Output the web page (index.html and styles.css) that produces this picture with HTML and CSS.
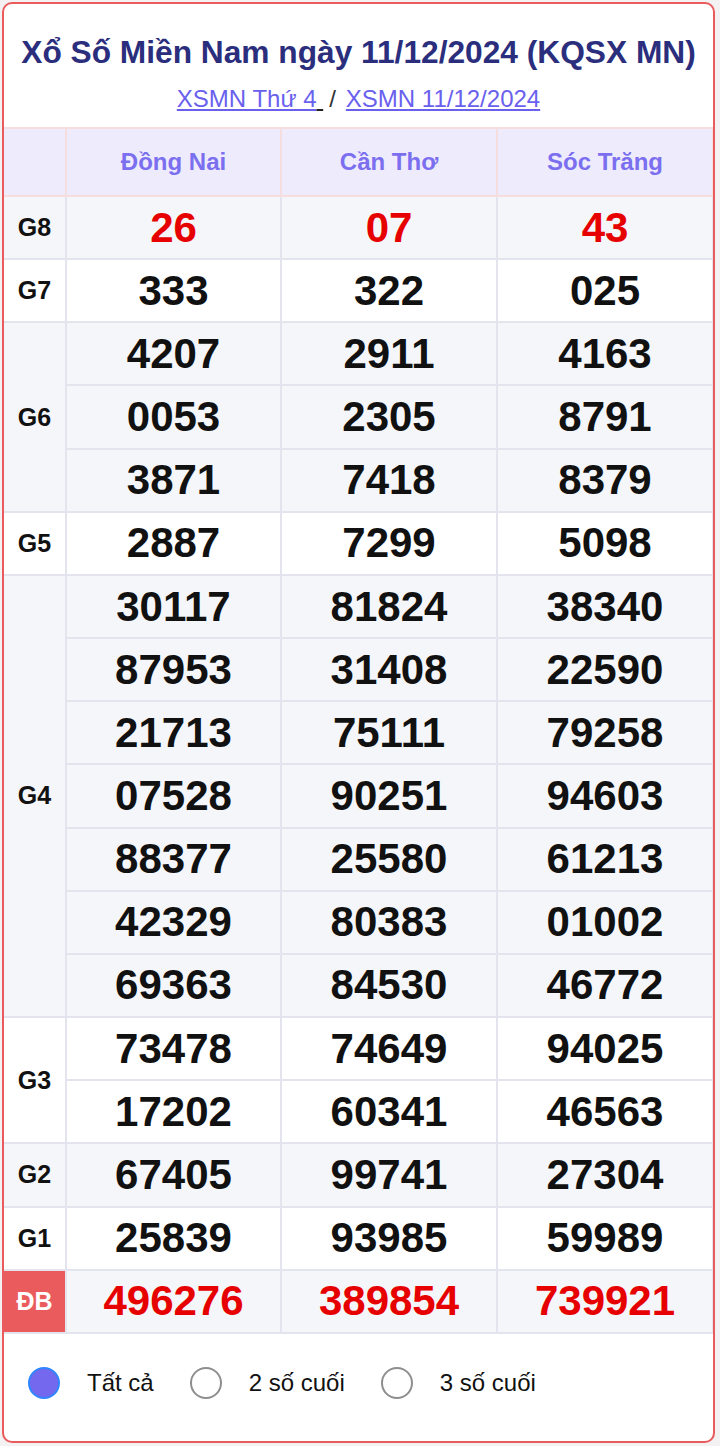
FILE: index.html
```html
<!DOCTYPE html>
<html lang="vi">
<head>
<meta charset="utf-8">
<link rel="stylesheet" href="styles.css">
</head>
<body>
<div class="box">
  <h1 class="title">Xổ Số Miền Nam ngày 11/12/2024 (KQSX MN)</h1>
  <div class="links"><a href="#">XSMN Thứ 4</a><span class="sp"> </span><span class="sep">/</span><a href="#">XSMN 11/12/2024</a></div>
  <table class="kq">
    <colgroup><col class="c0"><col class="c1"><col class="c2"><col class="c3"></colgroup>
    <thead>
      <tr><th></th><th>Đồng Nai</th><th>Cần Thơ</th><th>Sóc Trăng</th></tr>
    </thead>
    <tbody class="odd">
      <tr><td class="lbl">G8</td><td class="red">26</td><td class="red">07</td><td class="red">43</td></tr>
    </tbody>
    <tbody class="even">
      <tr><td class="lbl">G7</td><td>333</td><td>322</td><td>025</td></tr>
    </tbody>
    <tbody class="odd">
      <tr><td class="lbl" rowspan="3">G6</td><td>4207</td><td>2911</td><td>4163</td></tr>
      <tr><td>0053</td><td>2305</td><td>8791</td></tr>
      <tr><td>3871</td><td>7418</td><td>8379</td></tr>
    </tbody>
    <tbody class="even">
      <tr><td class="lbl">G5</td><td>2887</td><td>7299</td><td>5098</td></tr>
    </tbody>
    <tbody class="odd">
      <tr><td class="lbl" rowspan="7">G4</td><td>30117</td><td>81824</td><td>38340</td></tr>
      <tr><td>87953</td><td>31408</td><td>22590</td></tr>
      <tr><td>21713</td><td>75111</td><td>79258</td></tr>
      <tr><td>07528</td><td>90251</td><td>94603</td></tr>
      <tr><td>88377</td><td>25580</td><td>61213</td></tr>
      <tr><td>42329</td><td>80383</td><td>01002</td></tr>
      <tr><td>69363</td><td>84530</td><td>46772</td></tr>
    </tbody>
    <tbody class="even">
      <tr><td class="lbl" rowspan="2">G3</td><td>73478</td><td>74649</td><td>94025</td></tr>
      <tr><td>17202</td><td>60341</td><td>46563</td></tr>
    </tbody>
    <tbody class="odd">
      <tr><td class="lbl">G2</td><td>67405</td><td>99741</td><td>27304</td></tr>
    </tbody>
    <tbody class="even">
      <tr><td class="lbl">G1</td><td>25839</td><td>93985</td><td>59989</td></tr>
    </tbody>
    <tbody class="odd">
      <tr><td class="lbl db">ĐB</td><td class="red">496276</td><td class="red">389854</td><td class="red">739921</td></tr>
    </tbody>
  </table>
  <div class="radios">
    <label class="opt"><span class="dot on"></span><span class="txt">Tất cả</span></label>
    <label class="opt"><span class="dot"></span><span class="txt">2 số cuối</span></label>
    <label class="opt"><span class="dot"></span><span class="txt">3 số cuối</span></label>
  </div>
</div>
</body>
</html>
```

FILE: styles.css
```css
html, body {
  margin: 0;
  padding: 0;
}
body {
  background: #f3f1f1;
  font-family: "Liberation Sans", Arial, sans-serif;
  width: 720px;
  height: 1446px;
}
.box {
  box-sizing: border-box;
  margin: 2px 0 0 2px;
  width: 713px;
  height: 1441px;
  background: #fff;
  border: 2px solid #ea5b5e;
  border-radius: 10px;
  overflow: hidden;
}
.title {
  margin: 28px 0 0;
  line-height: 40px;
  font-size: 31.7px;
  font-weight: bold;
  color: #2b2e7d;
  text-align: center;
}
.links {
  margin-top: 12px;
  line-height: 30px;
  font-size: 24px;
  text-align: center;
  color: #333;
}
.links a {
  color: #6a60ee;
  text-decoration: underline;
}
.sp {
  text-decoration: underline;
  text-decoration-color: #222;
}
.sep {
  margin: 0 10px 0 6px;
}
.kq {
  margin-top: 13px;
  width: 709px;
  border-collapse: collapse;
  table-layout: fixed;
}
.c0 { width: 62px; }
.c1 { width: 215px; }
.c2 { width: 216px; }
.c3 { width: 216px; }
.kq th {
  height: 66px;
  background: #eeebfc;
  border: 2px solid #f6dede;
  color: #7b6ff0;
  font-size: 24px;
  font-weight: bold;
  padding: 0;
}
.kq th:first-child { border-left: none; }
.kq td {
  height: 61.17px;
  padding: 0;
  border: 2px solid #e4e4ee;
  text-align: center;
  font-size: 42px;
  font-weight: bold;
  color: #111;
  line-height: 1;
}
.kq td.lbl {
  font-size: 25px;
  border-left: none;
}
.odd td { background: #f5f6f9; }
.even td { background: #fff; }
.kq td.red { color: #e60000; }
.kq td.db {
  background: #ea5b5e;
  color: #fff;
}
.radios {
  display: flex;
  align-items: center;
  margin-top: 32px;
  padding-left: 24px;
  height: 34px;
}
.opt {
  display: flex;
  align-items: center;
  margin-right: 36px;
}
.dot {
  box-sizing: border-box;
  width: 32px;
  height: 32px;
  border-radius: 50%;
  border: 2.5px solid #8e8e8e;
  background: #fff;
}
.dot.on {
  background: #7468ee;
  border: 2.5px solid #2f86ff;
}
.txt {
  margin-left: 27px;
  font-size: 24px;
  color: #111;
}
```
